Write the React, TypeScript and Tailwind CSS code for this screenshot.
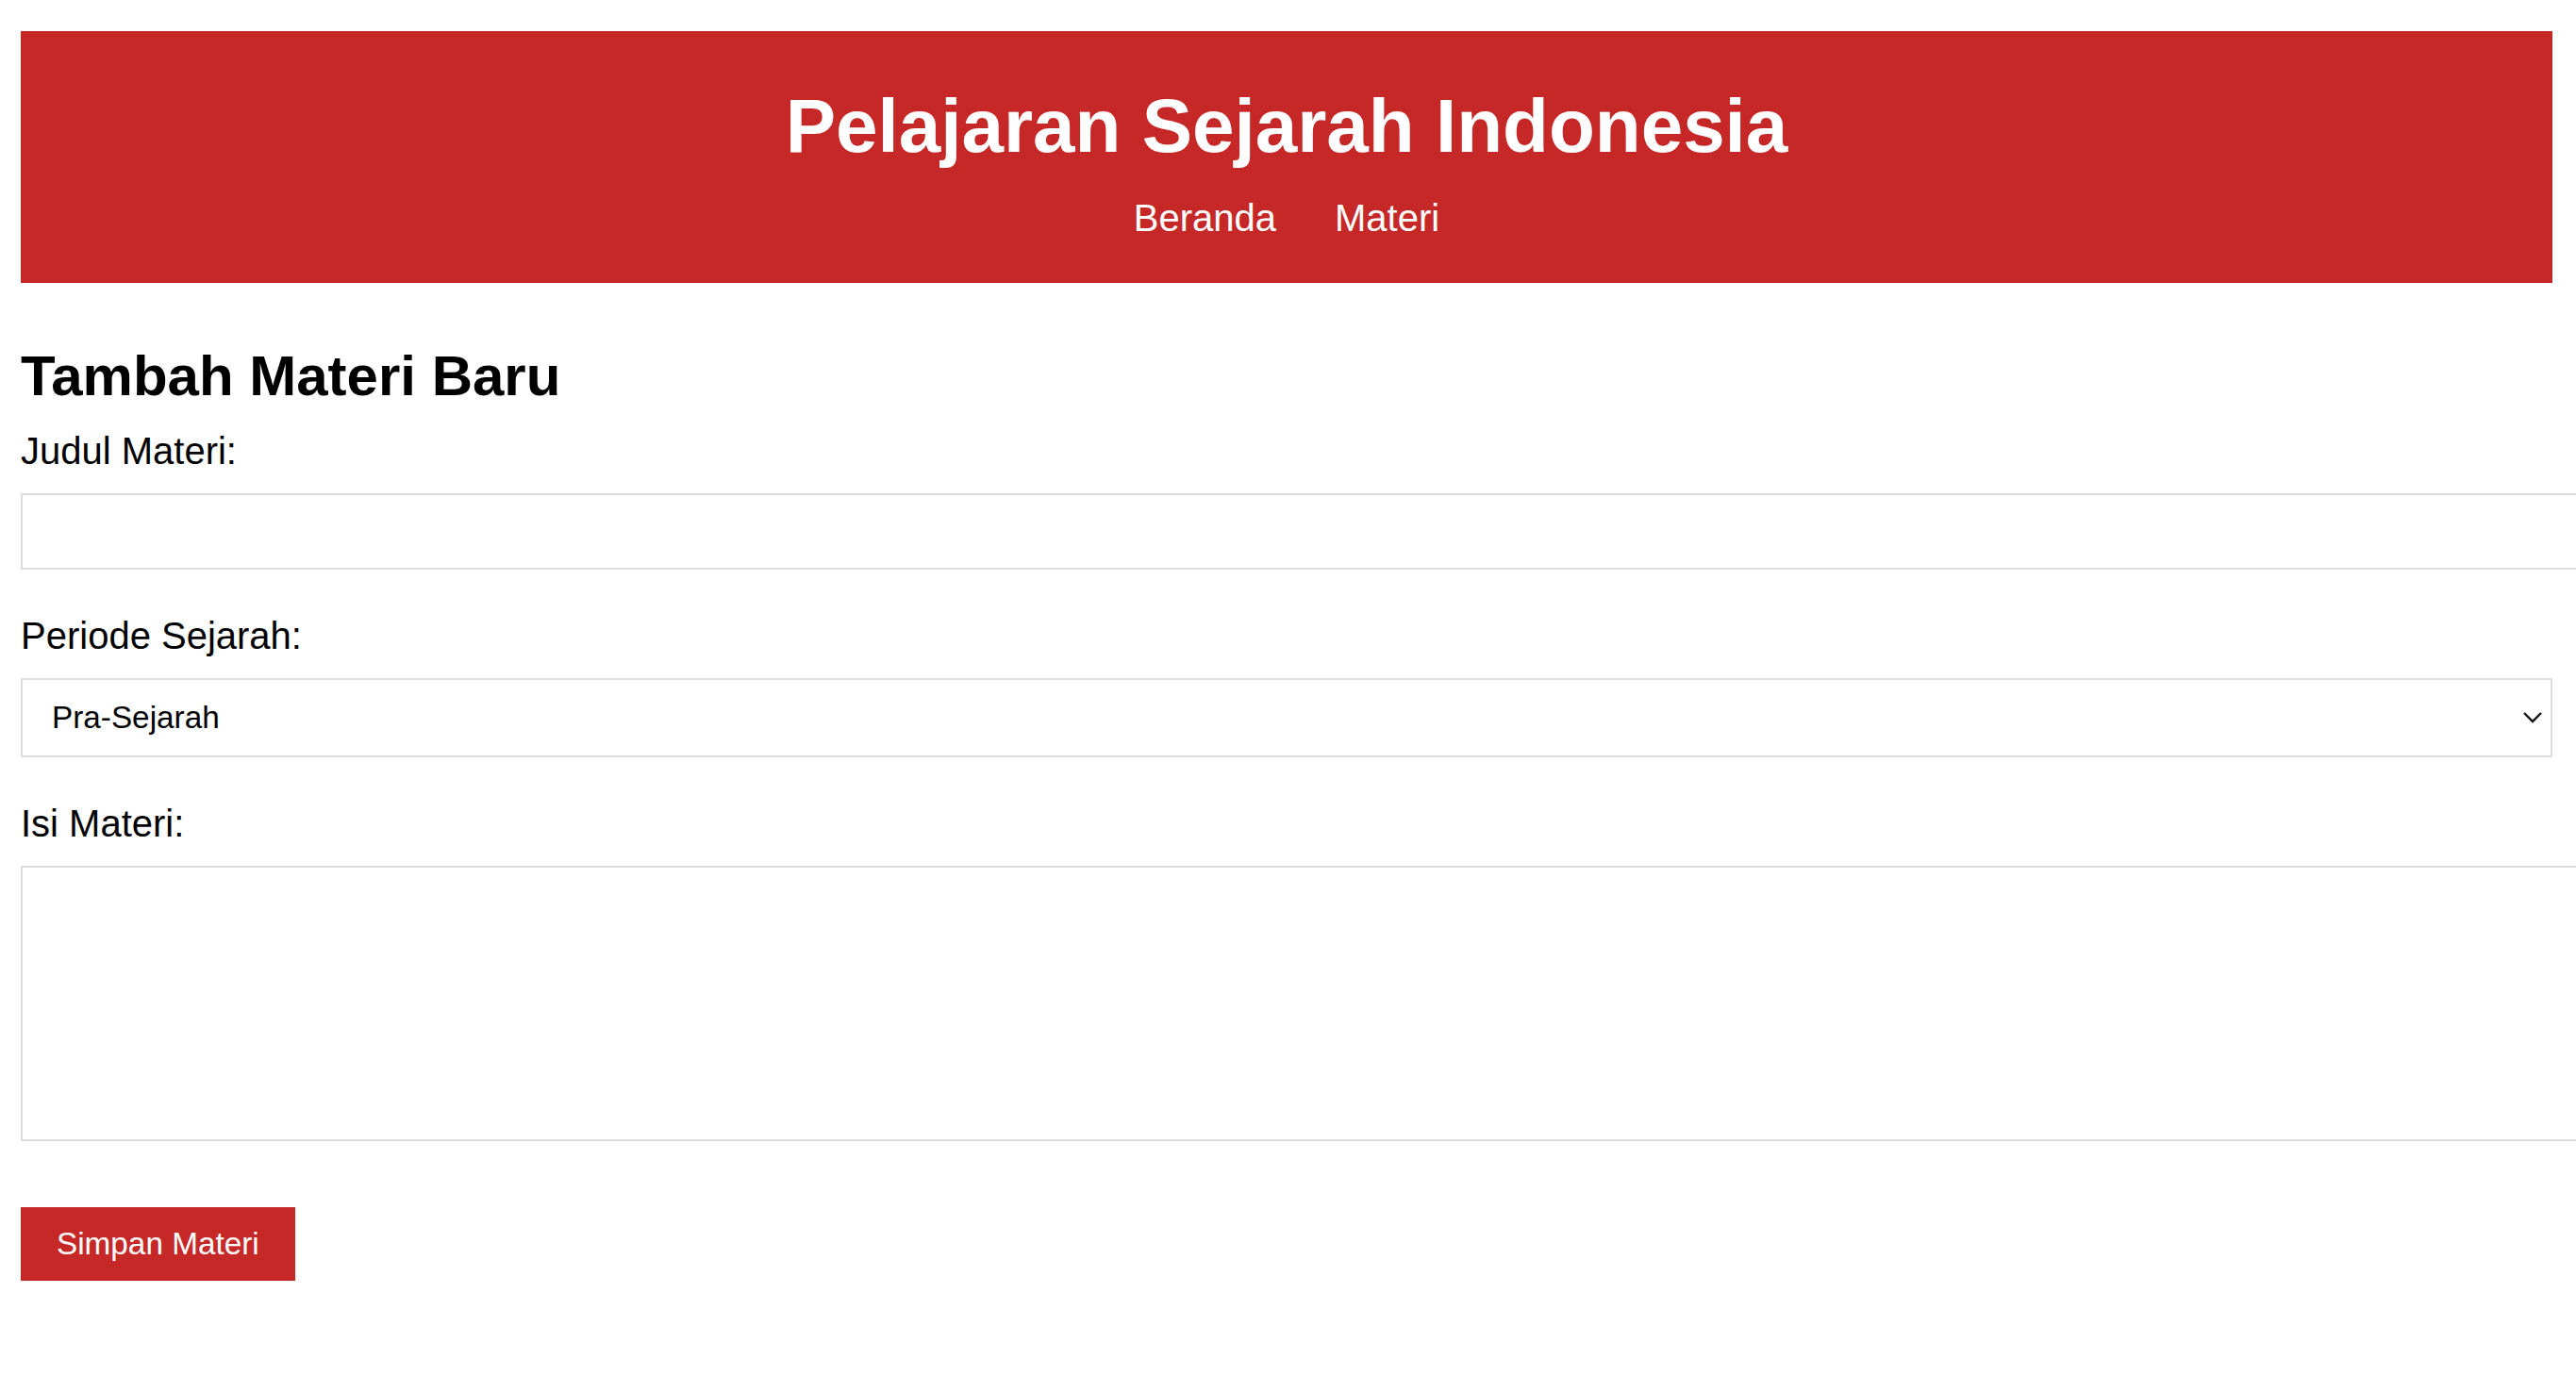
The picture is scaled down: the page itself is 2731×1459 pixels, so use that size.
import { useState } from 'react'

const periods = ['Pra-Sejarah', 'Hindu-Buddha', 'Islam', 'Kolonial', 'Kemerdekaan', 'Reformasi']

export default function App() {
  const [judul, setJudul] = useState('')
  const [periode, setPeriode] = useState(periods[0])
  const [isi, setIsi] = useState('')

  return (
    <div className="h-screen overflow-hidden bg-white px-[22px] pt-[33px] font-['Liberation_Sans',Arial,sans-serif] text-black">
      <div className="w-[2684px]">
        <header className="flex h-[267px] flex-col items-center bg-[#c62828] pt-[55px] text-white">
          <h1 className="text-[80px] font-bold leading-[92px]">Pelajaran Sejarah Indonesia</h1>
          <nav className="mt-[28px] flex gap-[62px] text-[40px] leading-[46px]">
            <a href="#" className="text-white no-underline">
              Beranda
            </a>
            <a href="#" className="text-white no-underline">
              Materi
            </a>
          </nav>
        </header>

        <main>
          <h2 className="mt-[64px] text-[60px] font-bold leading-[69px]">Tambah Materi Baru</h2>

          <form onSubmit={(e) => e.preventDefault()} className="flex flex-col items-start">
            <label htmlFor="judul" className="mt-[22px] block text-[40px] leading-[46px]">
              Judul Materi:
            </label>
            <input
              id="judul"
              type="text"
              value={judul}
              onChange={(e) => setJudul(e.target.value)}
              className="mt-[22px] h-[81px] w-[2740px] border-2 border-[#dddddd] bg-white px-[25px] text-[33px] outline-none"
            />

            <label htmlFor="periode" className="mt-[47px] block text-[40px] leading-[46px]">
              Periode Sejarah:
            </label>
            <div className="relative mt-[22px] w-full">
              <select
                id="periode"
                value={periode}
                onChange={(e) => setPeriode(e.target.value)}
                className="h-[84px] w-full appearance-none border-2 border-[#dddddd] bg-white pl-[31px] pr-[60px] text-[33.3px] leading-[38px] text-black outline-none"
              >
                {periods.map((p) => (
                  <option key={p} value={p}>
                    {p}
                  </option>
                ))}
              </select>
              <svg
                className="pointer-events-none absolute right-[10px] top-1/2 h-[14px] w-[22px] -translate-y-1/2"
                viewBox="0 0 22 14"
                fill="none"
                stroke="#111"
                strokeWidth={2.4}
              >
                <path d="M2 2l9 9 9-9" />
              </svg>
            </div>

            <label htmlFor="isi" className="mt-[47px] block text-[40px] leading-[46px]">
              Isi Materi:
            </label>
            <textarea
              id="isi"
              value={isi}
              onChange={(e) => setIsi(e.target.value)}
              className="mt-[22px] block h-[292px] w-[2740px] resize-none border-2 border-[#dddddd] bg-white p-[25px] text-[33px] outline-none"
            />

            <button
              type="submit"
              className="mt-[70px] flex h-[78px] items-center bg-[#c62828] px-[38px] text-[33.3px] text-white"
            >
              Simpan Materi
            </button>
          </form>
        </main>
      </div>
    </div>
  )
}
